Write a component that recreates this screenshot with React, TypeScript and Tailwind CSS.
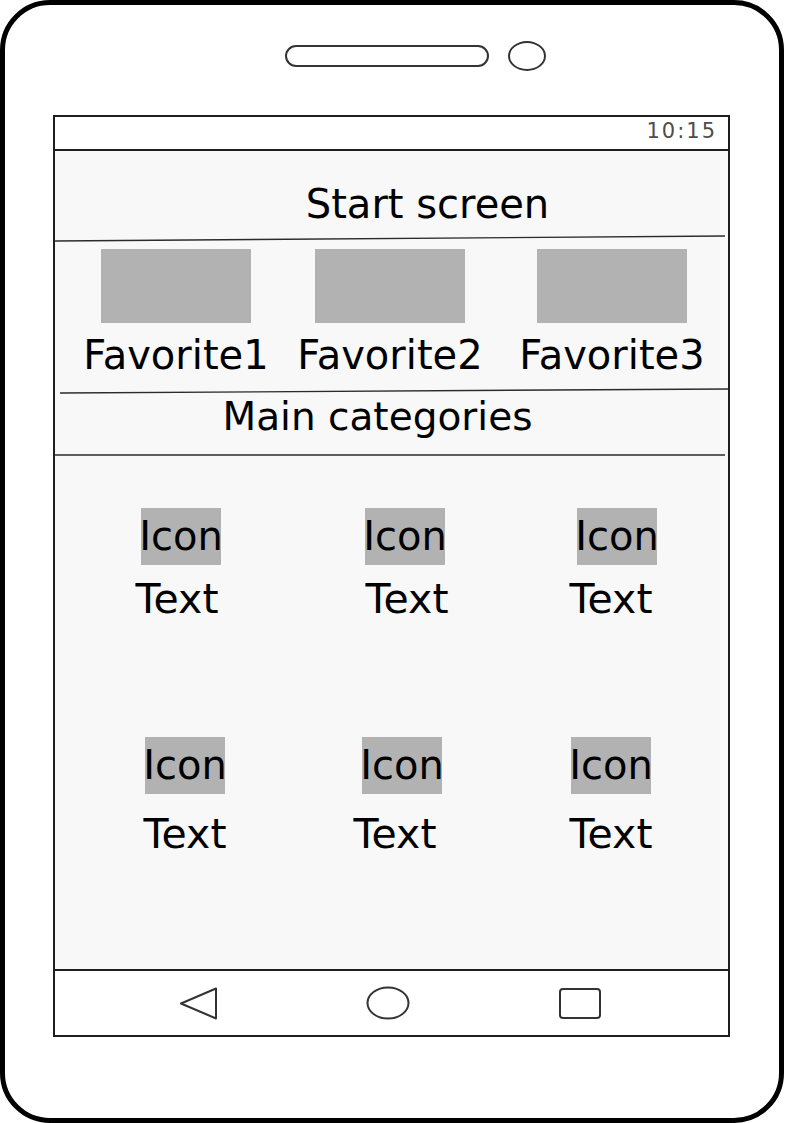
import React from 'react';

const favorites = [
    { label: 'Favorite1', cell: 'w-[200px]' },
    { label: 'Favorite2', cell: 'w-[228px]' },
    { label: 'Favorite3', cell: 'w-[216px]' },
];

// offsets measured per cell: box left and text left inside a 224px column
const categoryRows = [
    {
        rowClass: 'mt-[48px]',
        textTop: 'mt-[12px]',
        items: [
            { box: 'ml-[86px]', text: 'ml-[72px]' },
            { box: 'ml-[86px]', text: 'ml-[78px]' },
            { box: 'ml-[74px]', text: 'ml-[58px]' },
        ],
    },
    {
        rowClass: 'mt-[116px]',
        textTop: 'mt-[18px]',
        items: [
            { box: 'ml-[90px]', text: 'ml-[80px]' },
            { box: 'ml-[83px]', text: 'ml-[66px]' },
            { box: 'ml-[68px]', text: 'ml-[58px]' },
        ],
    },
];

const Separator = ({ y1, y2, x1 = 0, x2 = 670, className = '' }: { y1: number; y2: number; x1?: number; x2?: number; className?: string }) => (
    <svg className={`block h-[10px] w-[673px] ${className}`} viewBox="0 0 673 10">
        <line x1={x1} y1={y1} x2={x2} y2={y2} stroke="#2b2b2b" strokeWidth="1.4" />
    </svg>
);

const NavBar = () => (
    <div className="flex h-[64px] items-center bg-white pl-[124px]">
        <svg width="40" height="33" viewBox="0 0 40 33">
            <path d="M2 16.5 L37 1.5 L37 31.5 Z" fill="none" stroke="#333" strokeWidth="2" strokeLinejoin="round" />
        </svg>
        <svg className="ml-[147px]" width="44" height="34" viewBox="0 0 44 34">
            <ellipse cx="22" cy="17" rx="20.5" ry="15.5" fill="none" stroke="#333" strokeWidth="2" />
        </svg>
        <div className="ml-[149px] h-[31px] w-[42px] rounded-[4px] border-2 border-[#333]" />
    </div>
);

const App = () => {
    return (
        <div className="h-[1123px] w-[794px] overflow-hidden bg-white font-['DejaVu_Sans',sans-serif] text-black">
            <div className="h-[1123px] w-[784px] rounded-[50px] border-[5px] border-black bg-white">
                {/* speaker + camera */}
                <div className="ml-[280px] mt-[36px] flex h-[30px] items-center">
                    <div className="h-[22px] w-[204px] rounded-full border-2 border-[#333]" />
                    <div className="ml-[19px] h-[30px] w-[38px] rounded-[50%] border-2 border-[#333]" />
                </div>

                {/* screen */}
                <div className="ml-[48px] mt-[44px] flex h-[922px] w-[677px] flex-col border-2 border-[#1e1e1e]">
                    <div className="flex h-[34px] justify-end border-b-2 border-[#1e1e1e] bg-white pr-[11px] pt-[4px]">
                        <span className="text-[21px] leading-none tracking-[2px] text-[#4d4d4d]">10:15</span>
                    </div>

                    <div className="flex flex-1 flex-col bg-[#f8f8f8]">
                        <h1 className="pl-[72px] pt-[29px] text-center text-[40px] leading-[48px]">Start screen</h1>
                        <Separator className="mt-[6px]" y1={7} y2={2} />

                        <div className="mt-[5px] flex pl-[21px]">
                            {favorites.map((f) => (
                                <div key={f.label} className={`flex flex-col items-center ${f.cell}`}>
                                    <div className="h-[74px] w-[150px] bg-[#b2b2b2]" />
                                    <p className="mt-[10px] whitespace-nowrap text-[40px] leading-[44px]">{f.label}</p>
                                </div>
                            ))}
                        </div>

                        <Separator className="mt-[8px]" x1={5} x2={673} y1={8} y2={4} />
                        <h2 className="pr-[28px] text-center text-[39px] leading-[44px]">Main categories</h2>
                        <Separator className="mt-[11px]" y1={5} y2={5} />

                        {categoryRows.map((row, r) => (
                            <div key={r} className={`flex ${row.rowClass}`}>
                                {row.items.map((it, i) => (
                                    <div key={i} className="w-[224px]">
                                        <div className={`flex h-[57px] w-[80px] justify-center bg-[#b2b2b2] ${it.box}`}>
                                            <span className="whitespace-nowrap text-[40px] leading-[57px]">Icon</span>
                                        </div>
                                        <p className={`w-[100px] text-center text-[41px] leading-[44px] ${row.textTop} ${it.text}`}>Text</p>
                                    </div>
                                ))}
                            </div>
                        ))}
                    </div>

                    <div className="border-t-2 border-[#1e1e1e]">
                        <NavBar />
                    </div>
                </div>
            </div>
        </div>
    );
};

export default App;
